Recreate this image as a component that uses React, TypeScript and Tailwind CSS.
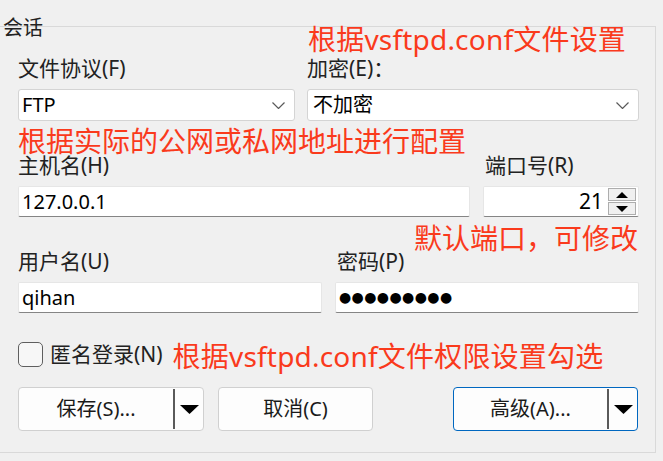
import React from "react";

const red = "text-[#fa3a1c]";

function Chevron() {
  return (
    <svg width="13" height="7" viewBox="0 0 13 7" className="shrink-0">
      <polyline points="0.5,0.5 6.5,6.5 12.5,0.5" fill="none" stroke="#5a5a5a" strokeWidth="1.2" />
    </svg>
  );
}

function Triangle() {
  return (
    <svg width="19" height="9" viewBox="0 0 19 9">
      <polygon points="0,0 19,0 9.5,9" fill="#000" />
    </svg>
  );
}

function Select({ value, className }: { value: string; className?: string }) {
  return (
    <div
      className={`h-[32px] flex items-center justify-between bg-white border border-[#d4d4d4] rounded-[3px] pl-[3px] pr-[9px] text-[20px] text-black ${className}`}
    >
      <span>{value}</span>
      <Chevron />
    </div>
  );
}

function Field({ children, className }: { children?: React.ReactNode; className?: string }) {
  return (
    <div
      className={`h-[31px] flex items-center bg-white border border-[#e6e6e6] border-b-[#858585] rounded-[2px] text-[20px] text-black ${className}`}
    >
      {children}
    </div>
  );
}

function SplitButton({ label, focused, className }: { label: string; focused?: boolean; className?: string }) {
  return (
    <div
      className={`h-[44px] flex items-center bg-[#fdfdfd] border rounded-[4px] ${focused ? "border-[#0067c0]" : "border-[#d0d0d0]"} ${className}`}
    >
      <div className="flex-1 text-center text-[20px] text-[#1a1a1a]">{label}</div>
      <div className="w-[2px] h-[40px] bg-[#5a5a5a]" />
      <div className="w-[28px] flex justify-center">
        <Triangle />
      </div>
    </div>
  );
}

export default function App() {
  return (
    <div className="w-[663px] h-[461px] bg-[#f0f0f0] overflow-hidden font-['Noto_Sans','Noto_Sans_CJK_SC',sans-serif]">
      {/* session group */}
      <div className="relative mt-[26px] w-[656px] h-[427px] border-t border-r border-b border-[#d9d9d9] pl-[18px] pr-[16px]">
        <span className="absolute left-[3px] top-[-11px] text-[20px] leading-[24px] text-[#222]">会话</span>

        <div className={`h-[29px] pl-[290px] text-[28px] leading-[24px] tracking-[0.2px] ${red}`}>根据vsftpd.conf文件设置</div>

        <div className="h-[33px] flex text-[21px] leading-[24px] text-[#222]">
          <span className="w-[289px]">文件协议(F)</span>
          <span>加密(E)：</span>
        </div>

        <div className="flex gap-[12px]">
          <Select value="FTP" className="w-[277px]" />
          <Select value="不加密" className="w-[332px] pl-[5px]" />
        </div>

        <div className={`mt-[8px] h-[24px] text-[28px] leading-[24px] ${red}`}>根据实际的公网或私网地址进行配置</div>

        <div className="h-[33px] flex text-[21px] leading-[24px] text-[#222]">
          <span className="w-[467px]">主机名(H)</span>
          <span>端口号(R)</span>
        </div>

        <div className="flex gap-[13px]">
          <Field className="w-[452px] pl-[3px]">127.0.0.1</Field>
          <Field className="w-[156px] justify-end pr-[2px]">
            <span className="mr-[5px] text-[21px]">21</span>
            <div className="flex flex-col gap-[1px]">
              <div className="w-[28px] h-[13px] flex items-center justify-center bg-[#f0f0f0] border border-[#adadad]">
                <svg width="12" height="6" viewBox="0 0 12 6">
                  <polygon points="0,6 12,6 6,0" fill="#000" />
                </svg>
              </div>
              <div className="w-[28px] h-[13px] flex items-center justify-center bg-[#f0f0f0] border border-[#adadad]">
                <svg width="12" height="6" viewBox="0 0 12 6">
                  <polygon points="0,0 12,0 6,6" fill="#000" />
                </svg>
              </div>
            </div>
          </Field>
        </div>

        <div className={`mt-[9px] h-[23px] text-right pr-[1px] text-[28px] leading-[24px] ${red}`}>默认端口，可修改</div>

        <div className="h-[33px] flex text-[21px] leading-[24px] text-[#222]">
          <span className="w-[319px]">用户名(U)</span>
          <span>密码(P)</span>
        </div>

        <div className="flex gap-[13px]">
          <Field className="w-[304px] pl-[3px]">qihan</Field>
          <Field className="w-[304px] pl-[3px]">
            <span className="font-['DejaVu_Sans'] text-[14px] tracking-[0.4px]">●●●●●●●●●</span>
          </Field>
        </div>

        <div className="mt-[29px] h-[28px] flex items-start">
          <div className="w-[25px] h-[25px] rounded-[5px] border-[1.5px] border-[#5f5f5f] bg-[#f7f7f7]" />
          <span className="ml-[7px] text-[21px] leading-[24px] text-[#222]">匿名登录(N)</span>
          <span className={`ml-[10px] mt-[2px] text-[28px] leading-[24px] tracking-[0.2px] ${red}`}>根据vsftpd.conf文件权限设置勾选</span>
        </div>

        <div className="mt-[17px] flex">
          <SplitButton label="保存(S)..." className="w-[186px]" />
          <button className="ml-[14px] w-[155px] h-[44px] bg-[#fdfdfd] border border-[#d0d0d0] rounded-[4px] text-[20px] text-[#1a1a1a]">
            取消(C)
          </button>
          <SplitButton label="高级(A)..." focused className="ml-auto mr-[1px] w-[185px]" />
        </div>
      </div>
    </div>
  );
}
